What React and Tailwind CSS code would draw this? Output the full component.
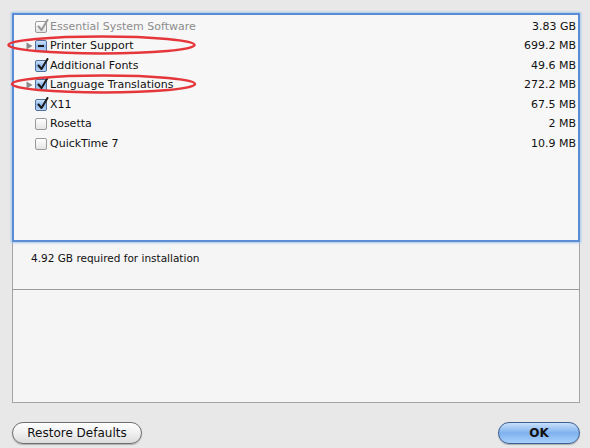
import React from 'react';

const items = [
  { name: 'Essential System Software', size: '3.83 GB', state: 'checked', disabled: true },
  { name: 'Printer Support', size: '699.2 MB', state: 'mixed', expandable: true },
  { name: 'Additional Fonts', size: '49.6 MB', state: 'checked' },
  { name: 'Language Translations', size: '272.2 MB', state: 'checked', expandable: true },
  { name: 'X11', size: '67.5 MB', state: 'checked' },
  { name: 'Rosetta', size: '2 MB', state: 'off' },
  { name: 'QuickTime 7', size: '10.9 MB', state: 'off' },
];

function Checkbox({ state, disabled }) {
  const blue = !disabled && state !== 'off';
  return (
    <span
      className={
        'relative inline-block w-[12px] h-[12px] rounded-[2px] border ' +
        (blue
          ? 'border-[#4f6f9c] bg-gradient-to-b from-[#cfe2f8] via-[#8db7ec] to-[#b9d6f6]'
          : 'border-[#9a9a9a] bg-gradient-to-b from-[#ffffff] to-[#e4e4e4]')
      }
    >
      {state === 'checked' && (
        <svg className="absolute left-[1px] top-[-3px]" width="12" height="13" viewBox="0 0 12 13">
          <path
            d="M1.5 7.5 L4.5 11 L10.5 1"
            fill="none"
            stroke={disabled ? '#9a9a9a' : '#1a1a1a'}
            strokeWidth="2"
            strokeLinecap="round"
            strokeLinejoin="round"
          />
        </svg>
      )}
      {state === 'mixed' && (
        <span className="absolute left-[2px] top-[4px] w-[6px] h-[2px] bg-[#1a1a1a]" />
      )}
    </span>
  );
}

export default function App() {
  return (
    <div
      className="w-[590px] h-[448px] bg-[#e8e8e8] pt-[13px] pl-[12px] pr-[10px] text-[#111]"
      style={{ fontFamily: '"DejaVu Sans", Verdana, sans-serif' }}
    >
      <div className="relative h-[390px] bg-[#f5f5f5] border border-[#a4a4a4] flex flex-col">
        {/* package list */}
        <div className="h-[229px] -mx-[1px] -mt-[1px] bg-[#f7f7f7] border-2 border-[#5a8dd3] shadow-[0_0_2px_1px_#a8c6ee] pt-[2px] pr-[2px]">
          {items.map((it) => (
            <div key={it.name} className="h-[19.5px] flex items-center text-[11px]">
              <span className="w-[21px] flex justify-end pr-[2px]">
                {it.expandable && (
                  <svg width="7" height="8" viewBox="0 0 7 8">
                    <path d="M0.5 0.5 L6.5 4 L0.5 7.5 Z" fill="#8a8a8a" />
                  </svg>
                )}
              </span>
              <Checkbox state={it.state} disabled={it.disabled} />
              <span className={'ml-[3px] ' + (it.disabled ? 'text-[#8c8c8c]' : 'text-[#111]')}>{it.name}</span>
              <span className="ml-auto">{it.size}</span>
            </div>
          ))}
        </div>

        {/* description */}
        <div className="h-[48px] border-b border-[#9a9a9a] pl-[18px] pt-[9px] text-[10.5px]">
          4.92 GB required for installation
        </div>
        <div className="flex-1 bg-[#f5f5f5]" />

        {/* highlight ellipses */}
        <svg className="absolute left-[-13px] top-[-14px] pointer-events-none" width="590" height="120">
          <ellipse cx="101.5" cy="45" rx="93" ry="8.5" fill="none" stroke="#e5363b" strokeWidth="2.5" />
          <ellipse cx="103.5" cy="84" rx="91.5" ry="8.5" fill="none" stroke="#e5363b" strokeWidth="2.5" />
        </svg>
      </div>

      <div className="mt-[19px] flex justify-between">
        <button className="h-[22px] w-[130px] rounded-full border border-[#6e6e6e] bg-gradient-to-b from-[#ffffff] via-[#f0f0f0] to-[#dcdcdc] text-[12px] text-[#111] shadow-[0_1px_1px_rgba(0,0,0,0.25)]">
          Restore Defaults
        </button>
        <button className="h-[22px] w-[82px] rounded-full border border-[#3c5f92] bg-gradient-to-b from-[#c9e0fa] via-[#7fb1ee] to-[#a9d0fb] text-[12px] font-bold text-[#111] shadow-[0_1px_1px_rgba(0,0,0,0.25)]">
          OK
        </button>
      </div>
    </div>
  );
}
